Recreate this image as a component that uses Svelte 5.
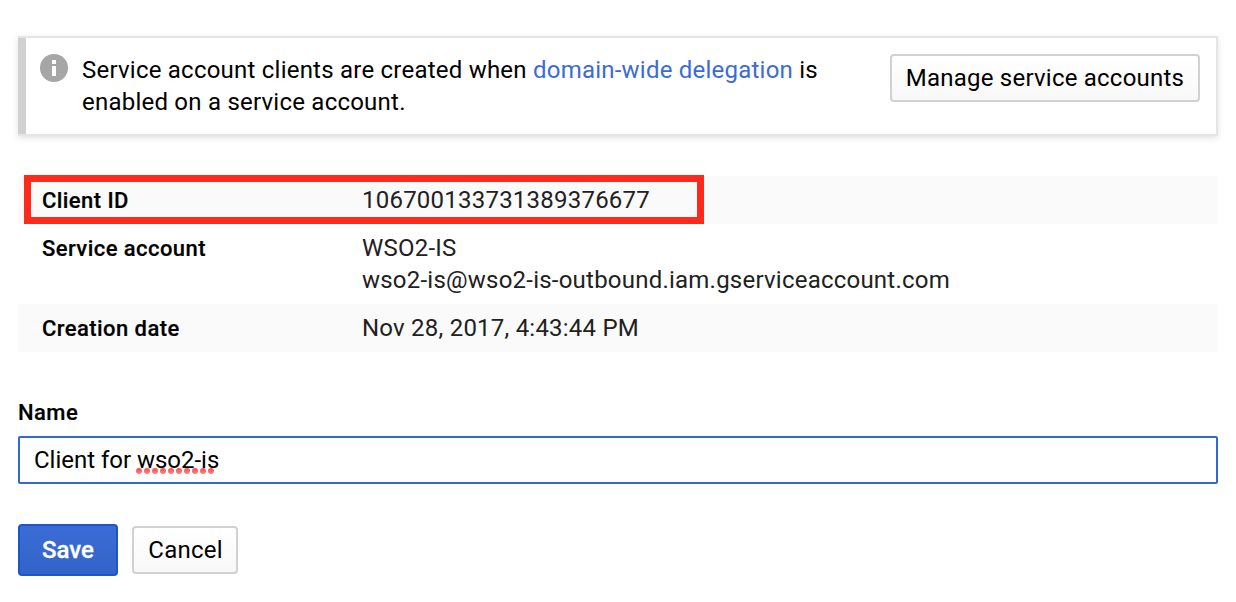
<script>
  const rows = [
    { label: 'Client ID', values: ['106700133731389376677'], marked: true },
    { label: 'Service account', values: ['WSO2-IS', 'wso2-is@wso2-is-outbound.iam.gserviceaccount.com'] },
    { label: 'Creation date', values: ['Nov 28, 2017, 4:43:44 PM'] }
  ];
  const dots = Array.from({ length: 10 }, (_, i) => 3 + i * 8);
</script>

<main>
  <section class="notice">
    <svg class="info" viewBox="0 0 28 28" width="28" height="28" aria-hidden="true">
      <circle cx="14" cy="14" r="14" fill="#a6a6a6" />
      <path d="M12 6h4v4h-4zM12 12h4v10h-4z" fill="#fff" />
    </svg>
    <p>
      Service account clients are created when <a href="#delegation">domain-wide delegation</a> is<br />
      enabled on a service account.
    </p>
    <button class="plain manage">Manage service accounts</button>
  </section>

  <dl>
    {#each rows as row}
      <div class="row" class:marked={row.marked}>
        <dt>{row.label}</dt>
        <dd>
          {#each row.values as value}
            <div>{value}</div>
          {/each}
        </dd>
      </div>
    {/each}
  </dl>

  <form onsubmit={(e) => e.preventDefault()}>
    <div class="label">Name</div>
    <div class="field">
      <span>Client for&nbsp;</span><span class="misspelt">wso2-is<svg width="80" height="6" viewBox="0 0 80 6" aria-hidden="true">
        <defs>
          <linearGradient id="dot" x1="0" y1="0" x2="0" y2="1">
            <stop offset="0" stop-color="#fb4848" />
            <stop offset="1" stop-color="#fd8585" />
          </linearGradient>
        </defs>
        {#each dots as x}
          <circle cx={x} cy="3" r="3" fill="url(#dot)" />
        {/each}
      </svg></span>
    </div>
    <div class="actions">
      <button class="save">Save</button>
      <button class="plain cancel">Cancel</button>
    </div>
  </form>
</main>

<style>
  :global(body) {
    margin: 0;
    background: #fff;
  }
  main {
    box-sizing: border-box;
    height: 602px;
    padding: 36px 18px 0;
    overflow: hidden;
    font: 24px/32px Roboto, sans-serif;
    letter-spacing: 0.225px;
    color: #000;
  }
  .notice {
    box-sizing: border-box;
    display: flex;
    align-items: flex-start;
    height: 100px;
    padding: 16px 16px 0 22px;
    border: 2px solid #e5e5e5;
    border-left: 0;
    box-shadow: 0 2px 6px rgba(0, 0, 0, 0.12);
    background: linear-gradient(#d1d1d1, #d1d1d1) left / 8px 100% no-repeat;
  }
  .info {
    flex: none;
    margin-right: 14px;
  }
  p {
    flex: 1;
    margin: 0;
    white-space: nowrap;
  }
  a {
    color: #3b6bd8;
    text-decoration: none;
  }
  button {
    box-sizing: border-box;
    padding: 0;
    font: inherit;
    letter-spacing: inherit;
    white-space: nowrap;
  }
  .plain {
    height: 48px;
    border: 2px solid #d1d1d1;
    border-radius: 4px;
    background: linear-gradient(#fff, #f8f8f8);
    color: #000;
  }
  .manage {
    width: 310px;
  }
  dl {
    margin: 40px 0 0;
  }
  .row {
    position: relative;
    display: grid;
    grid-template-columns: 320px 1fr;
    padding: 8px 24px;
  }
  .row:nth-child(odd) {
    background: #fafafa;
  }
  .marked::after {
    content: '';
    position: absolute;
    left: 6px;
    top: -1px;
    box-sizing: border-box;
    width: 680px;
    height: 49px;
    border: 7px solid #ff2a1c;
  }
  dt,
  .label {
    padding-top: 1px;
    font-size: 22px;
    line-height: 31px;
    font-weight: 500;
    letter-spacing: 0.43px;
    -webkit-text-stroke: 0.2px;
  }
  dt {
    line-height: 32px;
    margin-bottom: -1px;
  }
  dd {
    margin: 0;
    color: #212121;
  }
  .label {
    margin-top: 44px;
    line-height: 32px;
  }
  .field {
    box-sizing: border-box;
    height: 48px;
    margin-top: 7px;
    padding: 6px 14px;
    border: 2px solid #3367d6;
    border-radius: 2px;
    letter-spacing: -0.02px;
  }
  .misspelt {
    position: relative;
  }
  .misspelt svg {
    position: absolute;
    left: -1px;
    bottom: 0;
    z-index: -1;
  }
  .actions {
    display: flex;
    align-items: center;
    gap: 14px;
    margin-top: 40px;
  }
  .save {
    width: 100px;
    height: 52px;
    border: 2px solid #1c56cf;
    border-radius: 4px;
    background: linear-gradient(#3b6cd6, #3264c8);
    color: #fff;
    font-weight: 500;
    letter-spacing: 0;
    -webkit-text-stroke: 0.3px;
  }
  .cancel {
    width: 106px;
    padding-left: 1px;
  }
</style>
